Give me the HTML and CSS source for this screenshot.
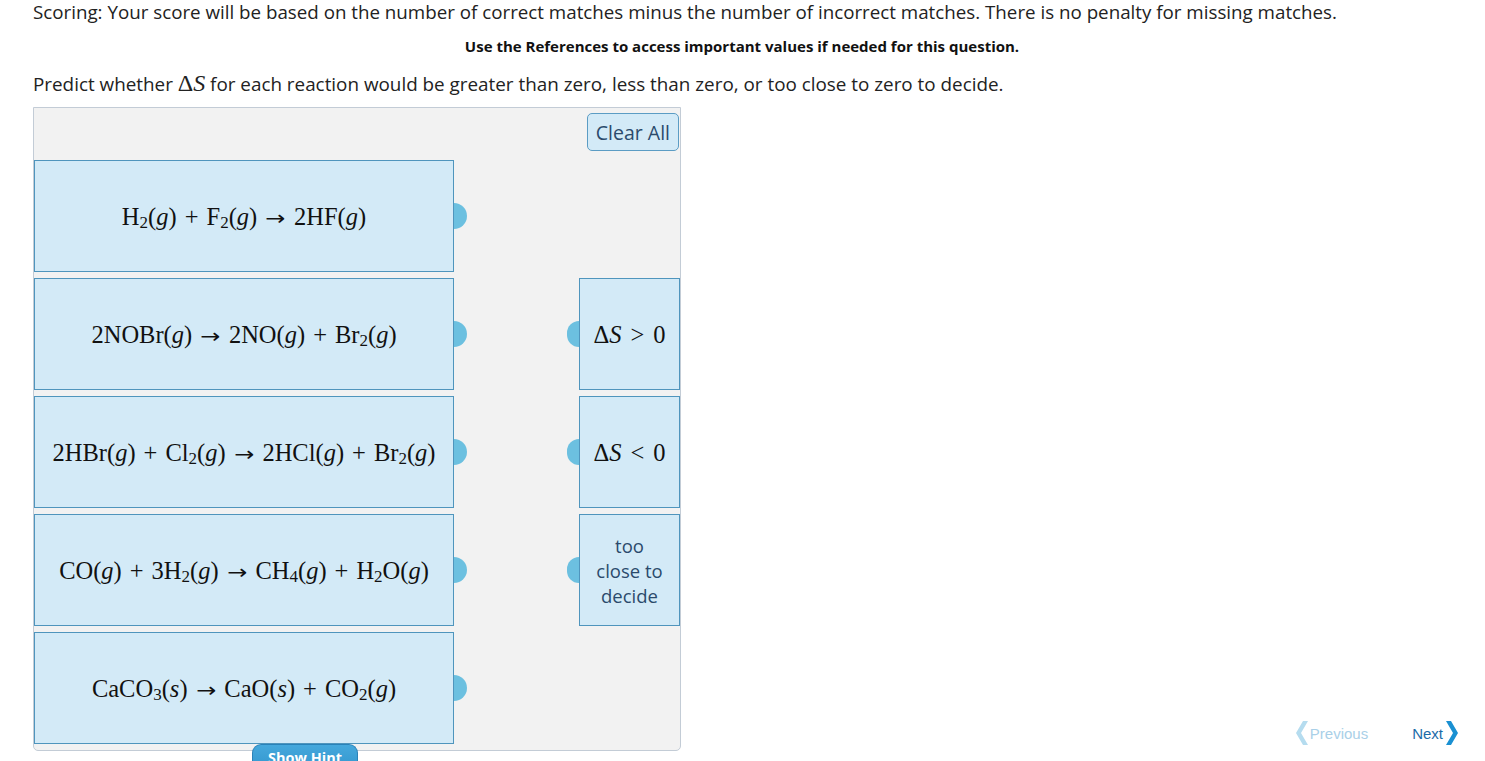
FILE: index.html
```html
<!DOCTYPE html>
<html>
<head>
<meta charset="utf-8">
<link rel="stylesheet" href="styles.css">
</head>
<body>
<div class="page">
  <p class="scoring">Scoring: Your score will be based on the number of correct matches minus the number of incorrect matches. There is no penalty for missing matches.</p>
  <p class="refs">Use the References to access important values if needed for this question.</p>
  <p class="prompt">Predict whether <span class="m">Δ<i>S</i></span> for each reaction would be greater than zero, less than zero, or too close to zero to decide.</p>
  <div class="work">
    <div class="matcher">
      <div class="toolbar"><button class="clear">Clear All</button></div>
      <div class="grid">
        <div class="box src r1"><span class="eq">H<sub>2</sub>(<i>g</i>)<span class="op">+</span>F<sub>2</sub>(<i>g</i>)<span class="ar">→</span>2HF(<i>g</i>)</span></div>
        <div class="box src r2"><span class="eq">2NOBr(<i>g</i>)<span class="ar">→</span>2NO(<i>g</i>)<span class="op">+</span>Br<sub>2</sub>(<i>g</i>)</span></div>
        <div class="box src r3"><span class="eq">2HBr(<i>g</i>)<span class="op">+</span>Cl<sub>2</sub>(<i>g</i>)<span class="ar">→</span>2HCl(<i>g</i>)<span class="op">+</span>Br<sub>2</sub>(<i>g</i>)</span></div>
        <div class="box src r4"><span class="eq">CO(<i>g</i>)<span class="op">+</span>3H<sub>2</sub>(<i>g</i>)<span class="ar">→</span>CH<sub>4</sub>(<i>g</i>)<span class="op">+</span>H<sub>2</sub>O(<i>g</i>)</span></div>
        <div class="box src r5"><span class="eq">CaCO<sub>3</sub>(<i>s</i>)<span class="ar">→</span>CaO(<i>s</i>)<span class="op">+</span>CO<sub>2</sub>(<i>g</i>)</span></div>
        <div class="box dst r2"><span class="eq">Δ<i>S</i><span class="rel">&gt;</span>0</span></div>
        <div class="box dst r3"><span class="eq">Δ<i>S</i><span class="rel">&lt;</span>0</span></div>
        <div class="box dst r4"><span class="word">too<br>close to<br>decide</span></div>
      </div>
    </div>
    <nav class="pager">
      <a class="prev"><svg width="13" height="24" viewBox="0 0 13 24"><path d="M8 0 H13 L6 12 L13 24 H8 L1 12 Z" fill="#b5dcef"/></svg>Previous</a>
      <a class="next">Next<svg width="14" height="24" viewBox="0 0 14 24"><path d="M1 0 H6 L13 12 L6 24 H1 L8 12 Z" fill="#1a90d2"/></svg></a>
    </nav>
  </div>
  <div class="hintrow"><div class="hint">Show Hint</div></div>
</div>
</body>
</html>
```
FILE: styles.css
```css
html, body {
  margin: 0;
  padding: 0;
  background: #ffffff;
  overflow: hidden;
}
.page {
  padding: 0 26px 0 33px;
  font-family: "Open Sans", "Liberation Sans", sans-serif;
  color: #222;
}
.scoring {
  margin: 0;
  font-size: 18.75px;
  line-height: 24px;
}
.refs {
  margin: 12px 0 0 0;
  font-size: 15px;
  line-height: 20px;
  font-weight: 700;
  text-align: center;
  width: 1418px;
  color: #111;
}
.prompt {
  margin: 15px 0 0 0;
  font-size: 18.85px;
  line-height: 24px;
}
.m {
  font-family: "Liberation Serif", serif;
  font-size: 24px;
}
.work {
  margin-top: 11px;
  display: flex;
  align-items: flex-end;
}
.matcher {
  width: 646px;
  border: 1px solid #c3ccd6;
  border-radius: 0 0 5px 5px;
  background: #f2f2f2;
  padding: 0 0 6px 0;
}
.toolbar {
  display: flex;
  justify-content: flex-end;
  padding: 5px 1px 0 0;
  margin-bottom: 9px;
}
.clear {
  height: 38px;
  padding: 0 8px;
  font-family: "Open Sans", "Liberation Sans", sans-serif;
  font-size: 19.5px;
  color: #2b4a6c;
  background: #d3eaf7;
  border: 1px solid #5b9cc4;
  border-radius: 5px;
}
.grid {
  display: grid;
  grid-template-columns: 420px 1fr;
  grid-template-rows: repeat(5, 112px);
  row-gap: 6px;
}
.box {
  position: relative;
  box-sizing: border-box;
  background: #d3eaf7;
  border: 1px solid #4f95bd;
  display: flex;
  align-items: center;
  justify-content: center;
}
.src { grid-column: 1; }
.dst {
  grid-column: 2;
  width: 101px;
  justify-self: end;
}
.r1 { grid-row: 1; }
.r2 { grid-row: 2; }
.r3 { grid-row: 3; }
.r4 { grid-row: 4; }
.r5 { grid-row: 5; }
.src::after {
  content: "";
  position: absolute;
  right: -14px;
  top: 50%;
  margin-top: -13px;
  width: 13px;
  height: 26px;
  border-radius: 0 13px 13px 0;
  background: #6cc0e0;
}
.dst::before {
  content: "";
  position: absolute;
  left: -13px;
  top: 50%;
  margin-top: -13px;
  width: 12px;
  height: 26px;
  border-radius: 13px 0 0 13px;
  background: #6cc0e0;
}
.eq {
  font-family: "Liberation Serif", "DejaVu Serif", serif;
  font-size: 24.5px;
  color: #111;
  white-space: nowrap;
  padding-top: 2px;
}
.eq sub {
  font-size: 17px;
  vertical-align: -3px;
  line-height: 0;
}
.op {
  margin: 0 8px;
}
.rel {
  margin: 0 9px;
}
.ar {
  display: inline-block;
  margin: 0 10px;
  font-family: "DejaVu Sans", sans-serif;
  font-size: 20px;
  transform: scaleX(1.2);
}
.word {
  font-family: "Open Sans", "Liberation Sans", sans-serif;
  font-size: 18.5px;
  line-height: 25px;
  color: #2b4a6c;
  text-align: center;
}
.pager {
  margin-left: auto;
  margin-bottom: 6px;
  display: flex;
  align-items: center;
  gap: 44px;
  font-family: "Liberation Sans", Arial, sans-serif;
  font-size: 15px;
}
.pager a {
  display: flex;
  align-items: center;
  gap: 2px;
}
.prev { color: #a9d0e8; }
.next { color: #1b6ba8; }
.hintrow {
  position: relative;
  z-index: 1;
  padding-left: 219px;
  margin-top: -7px;
}
.hint {
  box-sizing: border-box;
  width: 106px;
  height: 30px;
  border: 1px solid #2a82b8;
  border-bottom: none;
  border-radius: 9px 9px 0 0;
  background: linear-gradient(#45a8dc, #2f93cc);
  color: #ffffff;
  font-family: "Open Sans", "Liberation Sans", sans-serif;
  font-weight: 700;
  font-size: 14.5px;
  line-height: 18px;
  padding-top: 4px;
  text-align: center;
}
```
